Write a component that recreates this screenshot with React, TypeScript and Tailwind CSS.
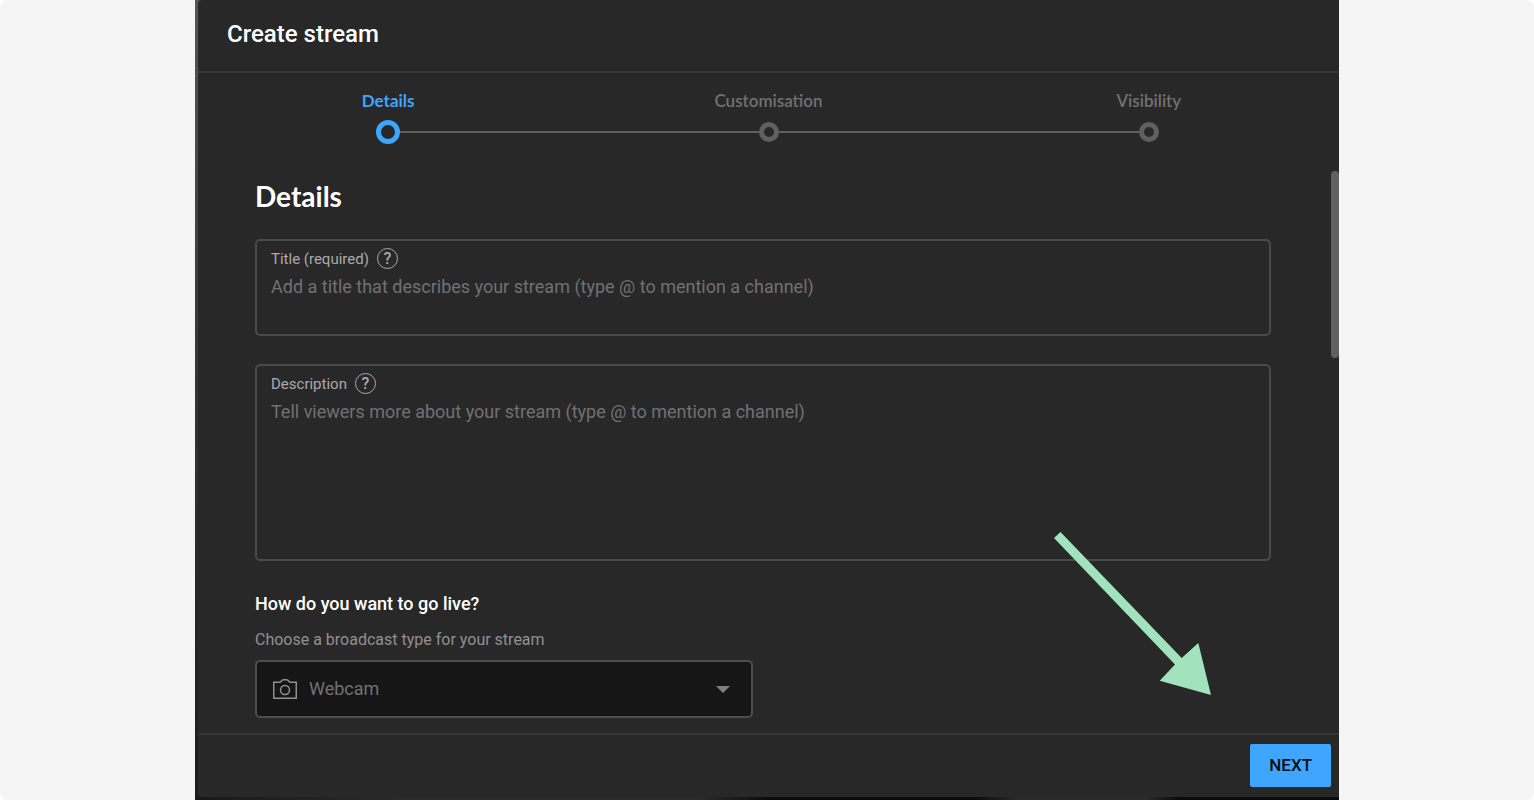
import React from 'react';

const steps = [
  { name: 'Details', active: true },
  { name: 'Customisation', active: false },
  { name: 'Visibility', active: false },
];

const Stepper: React.FC = () => {
  return (
    <ol className="grid grid-cols-3 pt-4 font-[Lato,sans-serif]">
      {steps.map((step, index) => (
        <li key={step.name} className="flex flex-col items-center">
          <span className={step.active ? 'text-[17px] leading-6 font-bold text-[#3ea6ff]' : 'text-[17px] leading-6 font-semibold text-[#717171]'}>
            {step.name}
          </span>
          <div className="mt-[7px] flex h-6 w-full items-center">
            <div className={index === 0 ? 'h-[2px] flex-1' : 'h-[2px] flex-1 bg-[#606060]'}></div>
            <div className={step.active ? 'size-6 rounded-full border-[5px] border-[#3ea6ff]' : 'size-5 rounded-full border-[5px] border-[#606060]'}></div>
            <div className={index === steps.length - 1 ? 'h-[2px] flex-1' : 'h-[2px] flex-1 bg-[#606060]'}></div>
          </div>
        </li>
      ))}
    </ol>
  );
};

interface FieldProps {
  id: string;
  label: string;
  placeholder: string;
  inputClass: string;
}

const Field: React.FC<FieldProps> = ({ id, label, placeholder, inputClass }) => {
  return (
    <div className="rounded-[5px] border-2 border-[#4a4a4a] px-[14px] pt-[7px]">
      <div className="flex items-center gap-2">
        <label htmlFor={id} className="pt-px text-[15px] leading-5 text-[#aaaaaa]">{label}</label>
        <button
          type="button"
          aria-label={`Help: ${label}`}
          className="flex size-[21px] items-center justify-center rounded-full border border-[#aaaaaa] text-base leading-none font-medium text-[#aaaaaa]"
        >
          ?
        </button>
      </div>
      <textarea
        id={id}
        placeholder={placeholder}
        className={`mt-[6px] block w-full resize-none bg-transparent text-lg leading-6 text-white outline-none placeholder:text-[#717171] ${inputClass}`}
      ></textarea>
    </div>
  );
};

const App: React.FC = () => {
  return (
    <div className="min-h-screen bg-white font-[Roboto,sans-serif]">
      <div className="flex min-h-screen justify-center rounded-lg bg-[#f5f5f5]">
        <div className="relative flex w-full max-w-[1144px] flex-col bg-linear-to-b from-[#555555] via-[#333333] to-[#1c1c1c] pl-[3px]">
          <main className="flex flex-1 flex-col rounded-l-sm bg-[#282828]">
            <header className="border-b-2 border-[#373737] px-[29px] pt-4 pb-[19px]">
              <h1 className="text-2xl leading-9 font-medium text-white">Create stream</h1>
            </header>

            <Stepper />

            <div className="mt-[27px] flex flex-1">
              <form className="flex-1 pr-[60px] pb-[15px] pl-[57px]">
                <h2 className="mt-[7px] mb-[25px] font-[Lato,sans-serif] text-[28px] leading-9 font-bold text-white">Details</h2>
                <div className="flex flex-col gap-7">
                  <Field
                    id="title"
                    label="Title (required)"
                    placeholder="Add a title that describes your stream (type @ to mention a channel)"
                    inputClass="h-[59px]"
                  />
                  <Field
                    id="description"
                    label="Description"
                    placeholder="Tell viewers more about your stream (type @ to mention a channel)"
                    inputClass="h-[159px]"
                  />
                </div>

                <h3 className="mt-[31px] text-lg leading-6 font-medium text-white">How do you want to go live?</h3>
                <label htmlFor="broadcast" className="mt-3 block text-base leading-6 text-[#909090]">
                  Choose a broadcast type for your stream
                </label>
                <div className="mt-2 flex h-[58px] w-[49%] items-center rounded-[5px] border-2 border-[#4d4d4d] bg-[#161616] pr-[21px] pl-4">
                  <svg viewBox="0 0 24 20" className="h-5 w-6" fill="none" stroke="#909090" strokeWidth="1.5">
                    <path d="M.75 3.25h5.6q1.2 0 1.9-1.2.8-1.3 2.2-1.3h3.1q1.4 0 2.2 1.3.7 1.2 1.9 1.2h5.6v16H.75z" />
                    <circle cx="12" cy="11" r="4.5" />
                  </svg>
                  <select id="broadcast" className="ml-3 flex-1 appearance-none bg-transparent text-lg leading-6 text-[#717171] outline-none">
                    <option>Webcam</option>
                  </select>
                  <svg viewBox="0 0 14 7" className="pointer-events-none h-[7px] w-[14px]" fill="#808080">
                    <path d="M0 0h14L7 7z" />
                  </svg>
                </div>
              </form>
              <div className="w-2">
                <div className="h-[187px] rounded-full bg-[#606060]"></div>
              </div>
            </div>

            <footer className="flex justify-end border-t-2 border-[#373737] px-2 pt-[9px] pb-[10px]">
              <button type="button" className="h-[43px] rounded-xs bg-[#3ea6ff] px-[19px] text-[17px] font-medium text-[#0d0d0d]">
                NEXT
              </button>
            </footer>
          </main>
          <div className="h-[3px] bg-[linear-gradient(90deg,#1a1819_0%,#2b2a2a_18%,#2b2a2a_44%,#0c0a0a_50%,#0c0a0a_68%,#2b2b2b_72%,#2b2b2b_83%,#0c0a0a_86%)]"></div>

          {/* pointer to the next button */}
          <svg viewBox="0 0 157 163" className="pointer-events-none absolute right-[128px] bottom-[105px] h-[163px] w-[157px]" fill="#a0e3bd">
            <path d="M0 6 6.5 0 127.7 126 144.3 111 157 163 105.7 148.8 121 132.5z" />
          </svg>
        </div>
      </div>
    </div>
  );
};

export default App;
